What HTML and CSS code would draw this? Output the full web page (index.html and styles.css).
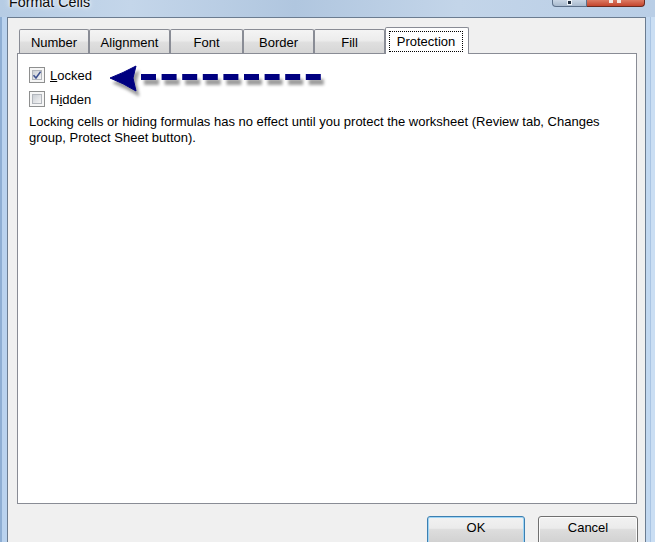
FILE: index.html
```html
<!DOCTYPE html>
<html>
<head>
<meta charset="utf-8">
<link rel="stylesheet" href="styles.css">
</head>
<body>
<div class="window">
  <div class="titlebar">
    <span class="title">Format Cells</span>
    <div class="caption">
      <span class="cap-help"></span>
      <span class="cap-close"></span>
    </div>
  </div>
  <div class="frame-row">
    <div class="frame-left"></div>
    <div class="dialog">
      <div class="tabs">
        <div class="tab w-number">Number</div>
        <div class="tab w-align">Alignment</div>
        <div class="tab w-font">Font</div>
        <div class="tab w-border">Border</div>
        <div class="tab w-fill">Fill</div>
        <div class="tab active w-prot"><span class="focus">Protection</span></div>
      </div>
      <div class="panel">
        <div class="check-row">
          <span class="cb checked">
            <svg width="10" height="10" viewBox="0 0 10 10"><path d="M1.5 5.2 L4 8 L8.6 1.6" fill="none" stroke="#3d5190" stroke-width="1.6"/></svg>
          </span>
          <span><u>L</u>ocked</span>
        </div>
        <div class="check-row">
          <span class="cb"></span>
          <span>H<u>i</u>dden</span>
        </div>
        <p class="note">Locking cells or hiding formulas has no effect until you protect the worksheet (Review tab, Changes group, Protect Sheet button).</p>
        <svg class="arrow" width="225" height="38" viewBox="0 0 225 38">
          <defs>
            <filter id="sh" x="-10%" y="-30%" width="130%" height="190%">
              <feDropShadow dx="3" dy="5" stdDeviation="1.6" flood-color="#000" flood-opacity="0.38"/>
            </filter>
          </defs>
          <g filter="url(#sh)" fill="#000080" stroke="#000080">
            <path d="M2 14 Q15 9 28 2 L25 14 L28 27 Q15 19 2 14 Z" stroke-width="1" stroke-linejoin="round"/>
            <line x1="33" y1="13" x2="214" y2="13" stroke-width="6" stroke-dasharray="15 5.6"/>
          </g>
        </svg>
      </div>
      <div class="buttons">
        <button class="btn btn-ok">OK</button>
        <button class="btn btn-cancel">Cancel</button>
      </div>
    </div>
    <div class="frame-right"></div>
  </div>
</div>
</body>
</html>
```
FILE: styles.css
```css
html, body {
  margin: 0;
  padding: 0;
}
body {
  width: 655px;
  height: 542px;
  overflow: hidden;
  font-family: "Liberation Sans", Arial, sans-serif;
  color: #000;
}
.window {
  width: 655px;
  height: 542px;
  display: flex;
  flex-direction: column;
  background: linear-gradient(90deg, #b6cce4 0%, #c4d6ea 20%, #b0c6df 45%, #c3d5e9 70%, #b9cee6 100%);
}
.titlebar {
  height: 17px;
  flex: none;
  display: flex;
  align-items: flex-start;
  padding: 0 10px 0 9px;
  overflow: hidden;
}
.title {
  font-size: 14.3px;
  line-height: 16px;
  margin-top: -6px;
  color: #0b0b0b;
  text-shadow: 0 0 6px #fff, 0 0 3px #fff;
}
.caption {
  margin-left: auto;
  display: flex;
}
.cap-help {
  position: relative;
  width: 35px;
  height: 7px;
  box-sizing: border-box;
  border: 1px solid #5d7089;
  border-top: none;
  border-radius: 0 0 0 4px;
  background: linear-gradient(#c8d5e4, #a8b9cd);
}
.cap-help::after {
  content: "";
  position: absolute;
  left: 15px;
  top: 1px;
  width: 3px;
  height: 3px;
  background: #1e2b3c;
  box-shadow: 0 0 0 1px #eef3f8;
}
.cap-close {
  position: relative;
  width: 58px;
  height: 7px;
  box-sizing: border-box;
  border: 1px solid #6a2a20;
  border-top: none;
  border-left: none;
  border-radius: 0 0 4px 0;
  background: linear-gradient(#dc7a63, #c4452d);
}
.cap-close::after {
  content: "";
  position: absolute;
  left: 22px;
  top: 0;
  width: 12px;
  height: 3px;
  background: linear-gradient(90deg, #f2e9e6 0 4px, transparent 4px 8px, #f2e9e6 8px);
}
.frame-row {
  flex: 1;
  min-height: 0;
  display: flex;
}
.frame-left {
  width: 7px;
  flex: none;
  background: linear-gradient(90deg, #8eaed3 0 2px, #b9d2ee 2px);
}
.frame-right {
  width: 9px;
  flex: none;
  background: linear-gradient(90deg, #c2d8f0 0 4px, #a9c4e3 4px 5px, #cadef3 5px);
}
.dialog {
  flex: 1;
  min-width: 0;
  border: 1px solid #6b7c90;
  border-bottom: none;
  background: #f0f0f0;
  padding: 9px 8px 0 9px;
  overflow: hidden;
  display: flex;
  flex-direction: column;
}
.tabs {
  flex: none;
  height: 26px;
  display: flex;
  align-items: flex-end;
  margin-left: 2px;
}
.tab {
  box-sizing: border-box;
  height: 24px;
  border: 1px solid #898c95;
  border-bottom: none;
  border-radius: 2px 2px 0 0;
  background: linear-gradient(#f4f4f4, #ececec 45%, #dfdfdf 55%, #d6d6d6);
  font-size: 13px;
  line-height: 15px;
  padding-top: 5px;
  text-align: center;
  white-space: nowrap;
}
.w-number { width: 70px; }
.w-align { width: 81px; }
.w-font { width: 73px; }
.w-border { width: 71px; }
.w-fill { width: 71px; }
.w-prot { width: 84px; }
.tab.active {
  height: 27px;
  margin-bottom: -1px;
  position: relative;
  z-index: 1;
  background: #fff;
  padding: 3px 5px 0 3px;
}
.focus {
  display: block;
  border: 1px dotted #000;
  line-height: 18px;
  padding-top: 1px;
}
.panel {
  flex: none;
  height: 451px;
  box-sizing: border-box;
  border: 1px solid #898c95;
  background: #fff;
  position: relative;
  padding: 13px 20px 0 11px;
  font-size: 13px;
}
.check-row {
  display: flex;
  align-items: center;
  gap: 5px;
  height: 16px;
  line-height: 16px;
}
.check-row > span:last-child {
  padding-top: 1px;
}
.check-row + .check-row {
  margin-top: 8px;
}
.cb {
  box-sizing: border-box;
  width: 16px;
  height: 16px;
  border: 1px solid #8e8f8f;
  background: #f6f6f6;
  padding: 2px;
  display: flex;
}
.cb::before {
  content: "";
  flex: 1;
  border: 1px solid #b2b6bc;
  background: linear-gradient(135deg, #cbcfd5, #f4f4f4);
}
.cb.checked {
  position: relative;
}
.cb.checked svg {
  position: absolute;
  left: 2px;
  top: 2px;
}
.note {
  margin: 7px 0 0;
  line-height: 16px;
}
.arrow {
  position: absolute;
  left: 90px;
  top: 10px;
}
.buttons {
  flex: none;
  display: flex;
  justify-content: flex-end;
  gap: 13px;
  margin-top: 12px;
  margin-right: -1px;
}
.btn {
  box-sizing: border-box;
  height: 30px;
  border: 1px solid #707070;
  border-radius: 3px;
  background: linear-gradient(#f2f2f2, #ebebeb 40%, #dddddd 45%, #cfcfcf);
  box-shadow: inset 0 0 0 1px #fcfcfc;
  font-family: "Liberation Sans", Arial, sans-serif;
  font-size: 13px;
  line-height: 16px;
  padding: 0 0 6px;
  margin: 0;
  color: #000;
  text-align: center;
}
.btn-ok {
  width: 98px;
  border-color: #3c7fb1;
  box-shadow: inset 0 0 0 1px #9fd5f5;
}
.btn-cancel {
  width: 100px;
}
```
